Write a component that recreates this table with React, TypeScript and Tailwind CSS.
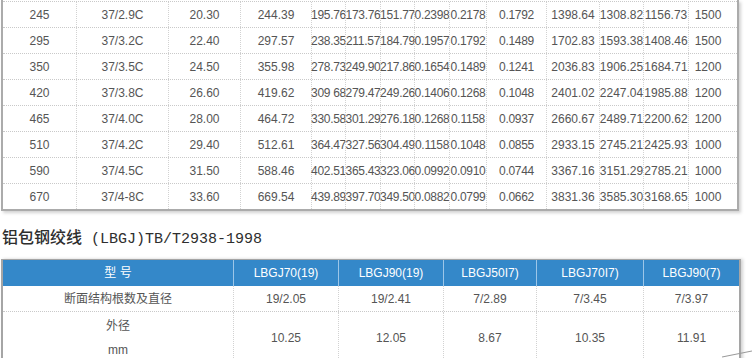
import React from "react";

const topRows: string[][] = [
  ["245", "37/2.9C", "20.30", "244.39", "195.76", "173.76", "151.77", "0.2398", "0.2178", "0.1792", "1398.64", "1308.82", "1156.73", "1500"],
  ["295", "37/3.2C", "22.40", "297.57", "238.35", "211.57", "184.79", "0.1957", "0.1792", "0.1489", "1702.83", "1593.38", "1408.46", "1500"],
  ["350", "37/3.5C", "24.50", "355.98", "278.73", "249.90", "217.86", "0.1654", "0.1489", "0.1241", "2036.83", "1906.25", "1684.71", "1200"],
  ["420", "37/3.8C", "26.60", "419.62", "309 68", "279.47", "249.26", "0.1406", "0.1268", "0.1048", "2401.02", "2247.04", "1985.88", "1200"],
  ["465", "37/4.0C", "28.00", "464.72", "330.58", "301.29", "276.18", "0.1268", "0.1158", "0.0937", "2660.67", "2489.71", "2200.62", "1200"],
  ["510", "37/4.2C", "29.40", "512.61", "364.47", "327.56", "304.49", "0.1158", "0.1048", "0.0855", "2933.15", "2745.21", "2425.93", "1000"],
  ["590", "37/4.5C", "31.50", "588.46", "402.51", "365.43", "323.06", "0.0992", "0.0910", "0.0744", "3367.16", "3151.29", "2785.21", "1000"],
  ["670", "37/4-8C", "33.60", "669.54", "439.89", "397.70", "349.50", "0.0882", "0.0799", "0.0662", "3831.36", "3585.30", "3168.65", "1000"],
];

const headers = ["型 号", "LBGJ70(19)", "LBGJ90(19)", "LBGJ50I7)", "LBGJ70I7)", "LBGJ90(7)"];
const row1 = ["断面结构根数及直径", "19/2.05", "19/2.41", "7/2.89", "7/3.45", "7/3.97"];
const row2 = ["10.25", "12.05", "8.67", "10.35", "11.91"];

const topCols =
  "grid grid-cols-[73px_92px_72px_71px_34px_35px_34px_35px_37px_60px_53px_44px_45px_49px]";
const botCols = "grid grid-cols-[230px_105px_105px_93px_107px_96px]";

export default function App() {
  return (
    <div
      className="relative w-[752px] h-[358px] overflow-hidden bg-white text-[12px] text-[#555]"
      style={{ fontFamily: '"Liberation Sans", Arial, "Noto Sans CJK SC", sans-serif' }}
    >
      {/* top table */}
      <div className="ml-[1px] w-[738px] border-l-2 border-r-2 border-b-2 border-[#ababab] pt-[1px] shadow-[2px_2px_3px_rgba(0,0,0,0.18)]">
        {topRows.map((r, i) => (
          <div key={i} className={`${topCols} h-[26px] border-t border-dotted border-[#c9c9c9]`}>
            {r.map((c, j) => (
              <div
                key={j}
                className={`flex items-center justify-center whitespace-nowrap leading-none ${
                  j > 0 ? "border-l border-dotted border-[#d2d2d2]" : ""
                } ${j === 13 ? "pr-[10px]" : ""} ${j >= 4 && j <= 9 ? "tracking-[-0.3px]" : ""}`}
              >
                {c}
              </div>
            ))}
          </div>
        ))}
      </div>

      {/* title */}
      <div className="mt-[15px] ml-[2px] h-[20px] leading-[20px] text-[#2e2e2e] whitespace-pre">
        <span className="text-[16px] font-medium" style={{ fontFamily: '"Noto Sans CJK SC", sans-serif' }}>
          铝包钢绞线
        </span>
        <span className="text-[15px]" style={{ fontFamily: '"Liberation Mono", "Courier New", monospace' }}>
          {" (LBGJ)TB/T2938-1998"}
        </span>
      </div>

      {/* bottom table */}
      <div className="mt-[13px] ml-[1px] w-[740px] border-l-2 border-r-2 border-t border-[#a5a5a5] shadow-[2px_0px_3px_rgba(0,0,0,0.18)]">
        <div className={`${botCols} h-[26px] bg-[#3488c9] text-white`}>
          {headers.map((h, j) => (
            <div
              key={j}
              className={`flex items-center justify-center whitespace-nowrap ${j > 0 ? "border-l border-[#9cc6e8]" : ""}`}
            >
              {h}
            </div>
          ))}
        </div>
        <div className={`${botCols} h-[26px] border-b border-dotted border-[#c9c9c9]`}>
          {row1.map((c, j) => (
            <div
              key={j}
              className={`flex items-center justify-center whitespace-nowrap ${
                j > 0 ? "border-l border-dotted border-[#d2d2d2]" : ""
              }`}
            >
              {c}
            </div>
          ))}
        </div>
        <div className={`${botCols} h-[52px]`}>
          <div className="flex flex-col items-center justify-center leading-[24px]">
            <span>外径</span>
            <span>mm</span>
          </div>
          {row2.map((c, j) => (
            <div
              key={j}
              className="flex items-center justify-center whitespace-nowrap border-l border-dotted border-[#d2d2d2]"
            >
              {c}
            </div>
          ))}
        </div>
      </div>

      {/* page curl shadow */}
      <svg className="absolute right-0 bottom-0" width="30" height="8" viewBox="0 0 30 8">
        <path d="M0 7 L30 1" stroke="#9a9a9a" strokeWidth="1.2" fill="none" />
      </svg>
    </div>
  );
}
